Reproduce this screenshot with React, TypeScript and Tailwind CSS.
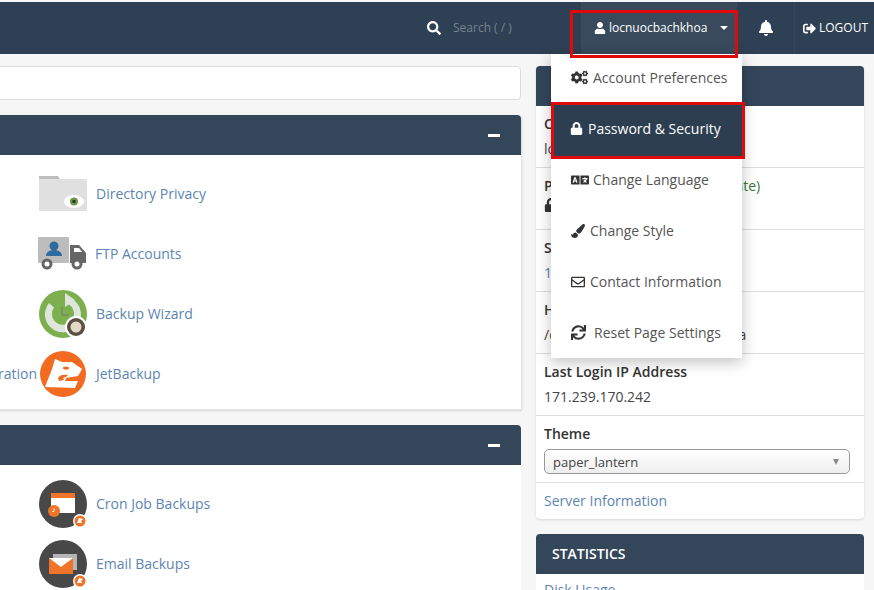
import React from 'react';
import {
  FaBell,
  FaCogs,
  FaLanguage,
  FaLock,
  FaPaintBrush,
  FaRegEnvelope,
  FaSearch,
  FaSignOutAlt,
  FaSync,
  FaUser,
} from 'react-icons/fa';

const FolderIcon = () => (
  <svg width="48" height="36" viewBox="0 0 48 36">
    <path d="M0 0h19l2 3H0z" fill="#bdbdbd" />
    <rect x="0" y="3" width="48" height="32" fill="#e0e0e0" />
    <ellipse cx="35" cy="25.5" rx="10" ry="6.5" fill="#fff" />
    <circle cx="35" cy="25.5" r="4" fill="#6f9a45" />
    <circle cx="35" cy="25.5" r="1.8" fill="#2b3a2a" />
  </svg>
);

const TruckIcon = () => (
  <svg width="48" height="34" viewBox="0 0 48 34">
    <rect x="0" y="0" width="31" height="26" rx="1" fill="#bcbcbc" />
    <circle cx="16" cy="9" r="4.5" fill="#2d6a9f" />
    <path d="M8 19c0-4 4-6 8-6s8 2 8 6z" fill="#2d6a9f" />
    <path d="M32 8h9l7 8v10H32z" fill="#666" />
    <path d="M36 11h5l3 4h-8z" fill="#fff" />
    <circle cx="9" cy="27" r="5.5" fill="#666" />
    <circle cx="9" cy="27" r="2.5" fill="#fff" />
    <circle cx="39" cy="27" r="5.5" fill="#666" />
    <circle cx="39" cy="27" r="2.5" fill="#fff" />
  </svg>
);

const WizardIcon = () => (
  <svg width="48" height="48" viewBox="0 0 48 48">
    <circle cx="24" cy="24" r="24" fill="#7cb04f" />
    <path d="M26 6.5A18 18 0 1 1 10 13l5 4.5A11 11 0 1 0 26 13z" fill="#dfe5da" />
    <path d="M26 3l10 7-10 7z" fill="#dfe5da" />
    <path d="M23 17v8h6" fill="none" stroke="#777" strokeWidth="1" />
    <circle cx="37" cy="37" r="11" fill="#fff" />
    <circle cx="37" cy="37" r="9" fill="#5a4f45" />
    <circle cx="37" cy="37" r="5.5" fill="#e4d9c4" />
  </svg>
);

const JetIcon = () => (
  <svg width="46" height="46" viewBox="0 0 46 46">
    <circle cx="23" cy="23" r="23" fill="#f26b21" />
    <path d="M5 36l7-18 3-10 7 3h10l10 7-4 7-12 2-1 3h13l-3 7z" fill="#fff" />
    <path d="M18 27c1-3 6-4 10-3l-2 2-3 1 1 2-5 1z" fill="#f26b21" />
    <ellipse cx="26" cy="17" rx="3" ry="1.5" fill="#f26b21" />
  </svg>
);

const Badge = () => (
  <>
    <circle cx="41" cy="41" r="7" fill="#fff" />
    <circle cx="41" cy="41" r="5.5" fill="#f0752a" />
    <path d="M38 43l2-5 4 1-2 2 1 2z" fill="#fff" />
  </>
);

const CronIcon = () => (
  <svg width="48" height="48" viewBox="0 0 48 48">
    <circle cx="24" cy="24" r="24" fill="#484848" />
    <rect x="12" y="13" width="24" height="20" fill="#fff" />
    <rect x="12" y="13" width="24" height="5" fill="#f0752a" />
    <circle cx="15" cy="31" r="6" fill="#f0752a" />
    <path d="M15 28v3.5h-2" fill="none" stroke="#fff" strokeWidth="0.8" />
    <Badge />
  </svg>
);

const MailIcon = () => (
  <svg width="48" height="48" viewBox="0 0 48 48">
    <circle cx="24" cy="24" r="24" fill="#484848" />
    <rect x="14" y="14" width="24" height="16" fill="#b5b5b5" />
    <rect x="10" y="18" width="24" height="16" fill="#f0752a" />
    <path d="M10 18h24L22 27z" fill="#fff" />
    <Badge />
  </svg>
);

const apps = [
  { icon: <FolderIcon />, name: 'Directory Privacy', shift: '', before: '' },
  { icon: <TruckIcon />, name: 'FTP Accounts', shift: '-ml-[1px]', before: '' },
  { icon: <WizardIcon />, name: 'Backup Wizard', shift: '', before: '' },
  { icon: <JetIcon />, name: 'JetBackup', shift: '', before: 'ration' },
];

const backups = [
  { icon: <CronIcon />, name: 'Cron Job Backups', shift: '', before: '' },
  { icon: <MailIcon />, name: 'Email Backups', shift: '', before: '' },
];

const menu = [
  { icon: <FaCogs className="text-[17px]" />, label: 'Account Preferences', gap: 'gap-[5px]' },
  { icon: <FaLock className="text-[13px]" />, label: 'Password & Security', gap: 'gap-[5px]', active: true },
  { icon: <FaLanguage className="text-[18px]" />, label: 'Change Language', gap: 'gap-[4px]' },
  { icon: <FaPaintBrush className="text-[14px]" />, label: 'Change Style', gap: 'gap-[5px]' },
  { icon: <FaRegEnvelope className="text-[14px]" />, label: 'Contact Information', gap: 'gap-[5px]' },
  { icon: <FaSync className="text-[15px]" />, label: 'Reset Page Settings', gap: 'gap-[8px]' },
];

const AppRow = ({ app }: { app: typeof apps[number] }) => (
  <div className="flex h-[60px] items-center">
    <div className="w-[47px] shrink-0 pb-[2px] pr-[2px] text-right text-[#5d85b3]">{app.before}</div>
    <div className={`flex w-[48px] shrink-0 justify-center ${app.shift}`}>{app.icon}</div>
    <a className="ml-[9px] pb-[2px] text-[#5d85b3]">{app.name}</a>
  </div>
);

const PanelHead = () => (
  <div className="flex h-10 items-center justify-end rounded-tr bg-[#33465a] pr-[21px]">
    <div className="h-[3px] w-3 bg-white" />
  </div>
);

const InfoRow = ({ title, children }: { title: React.ReactNode; children: React.ReactNode }) => (
  <div className="h-[62px] border-b border-[#ddd] px-2 pt-[5px] leading-[25px]">
    <div className="font-semibold text-[#333]">{title}</div>
    <div>{children}</div>
  </div>
);

export default function App() {
  return (
    <div className="relative h-[590px] w-[874px] overflow-hidden bg-[#f6f6f6] font-['Open_Sans',sans-serif] text-[14px] text-[#444]">
      <header className="mt-[2px] flex h-[52px] items-center bg-[#2e4053] pl-[427px] text-white">
        <FaSearch className="text-[14px]" />
        <span className="ml-3 w-[128px] text-[12px] text-[#75828f]">Search ( / )</span>
        <div className="flex h-[52px] w-[156px] items-center bg-[#394a5c] pl-[13px] text-[12px] font-medium">
          <FaUser className="text-[12px]" />
          <span className="ml-[3px]">locnuocbachkhoa</span>
          <span className="ml-[13px] h-0 w-0 border-x-[4px] border-t-[4px] border-x-transparent border-t-white" />
        </div>
        <div className="flex h-[52px] w-[58px] items-center justify-center border-r border-[#35485b]">
          <FaBell className="text-[16px]" />
        </div>
        <div className="ml-[4px] flex items-center gap-[3px] pl-[4px] text-[12px] font-medium">
          <FaSignOutAlt className="text-[13px]" />
          <span>LOGOUT</span>
        </div>
      </header>

      <div className="flex items-start gap-[14px] pt-3">
        <div className="-ml-2 w-[530px] shrink-0">
          <div className="mr-[1px] h-[34px] rounded border border-[#ddd] bg-white" />
          <section className="mt-[15px] rounded-tr border-b border-r border-[#e3e3e3] bg-white shadow-sm">
            <PanelHead />
            <div className="pb-[5px] pt-[9px]">
              {apps.map((app) => (
                <AppRow key={app.name} app={app} />
              ))}
            </div>
          </section>
          <section className="mr-[1px] mt-[15px] rounded-tr bg-white">
            <PanelHead />
            <div className="pt-[9px]">
              {backups.map((app) => (
                <AppRow key={app.name} app={app} />
              ))}
            </div>
          </section>
        </div>

        <aside className="w-[328px] shrink-0">
          <section className="rounded bg-white shadow-sm">
            <div className="h-10 rounded-t bg-[#33465a]" />
            <InfoRow title="Current User">locnuocbachkhoa</InfoRow>
            <InfoRow title={<>Primary Domain <span className="ml-[46px] font-normal text-[#3c763d]">(Update)</span></>}>
              <FaLock className="text-[14px] text-[#333]" />
            </InfoRow>
            <InfoRow title="Shared IP Address">
              <span className="text-[#5d85b3]">171.239.170.242</span>
            </InfoRow>
            <InfoRow title="Home Directory">/croot/home/locnuocbachkhoa</InfoRow>
            <InfoRow title="Last Login IP Address">171.239.170.242</InfoRow>
            <div className="h-[67px] border-b border-[#ddd] pl-2 pr-[14px] pt-[5px]">
              <div className="font-semibold leading-[25px] text-[#333]">Theme</div>
              <div className="mt-[3px] flex h-[25px] items-center justify-between rounded-[5px] border border-[#999] bg-gradient-to-b from-white to-[#eee] pl-2 pr-[10px] text-[13px]">
                <span className="pt-[2px]">paper_lantern</span>
                <span className="h-0 w-0 border-x-[3.5px] border-t-[6px] border-x-transparent border-t-[#888]" />
              </div>
            </div>
            <div className="flex h-9 items-center px-2 pb-[2px] text-[#5d85b3]">Server Information</div>
          </section>
          <section className="mt-[15px] rounded-t bg-white">
            <div className="flex h-10 items-center rounded-t bg-[#33465a] px-4 pb-[2px] font-semibold text-white">STATISTICS</div>
            <div className="px-2 pt-[5px] text-[#5d85b3]">Disk Usage</div>
          </section>
        </aside>
      </div>

      {/* user dropdown */}
      <div className="absolute left-[551px] top-[54px] h-[304px] w-[191px] overflow-hidden bg-white">
        {menu.map((item) => (
          <div
            key={item.label}
            className={`flex h-[51px] items-center pb-[4px] ${item.gap} ${
              item.active ? 'bg-[#2c3e50] pl-[19px] font-medium text-white' : 'pl-[20px] text-[#555]'
            }`}
          >
            <span className={item.active ? 'text-white' : 'text-[#333]'}>{item.icon}</span>
            <span>{item.label}</span>
          </div>
        ))}
      </div>
      <div className="absolute left-[551px] top-[54px] h-[304px] w-[191px] shadow-[0_4px_14px_rgba(0,0,0,0.25)]" />

      {/* red highlight boxes */}
      <div className="absolute left-[570px] top-[10px] h-[48px] w-[168px] border-[3px] border-[#e00a0a]" />
      <div className="absolute left-[551px] top-[102px] h-[57px] w-[194px] border-[3px] border-[#e00a0a]" />
    </div>
  );
}
